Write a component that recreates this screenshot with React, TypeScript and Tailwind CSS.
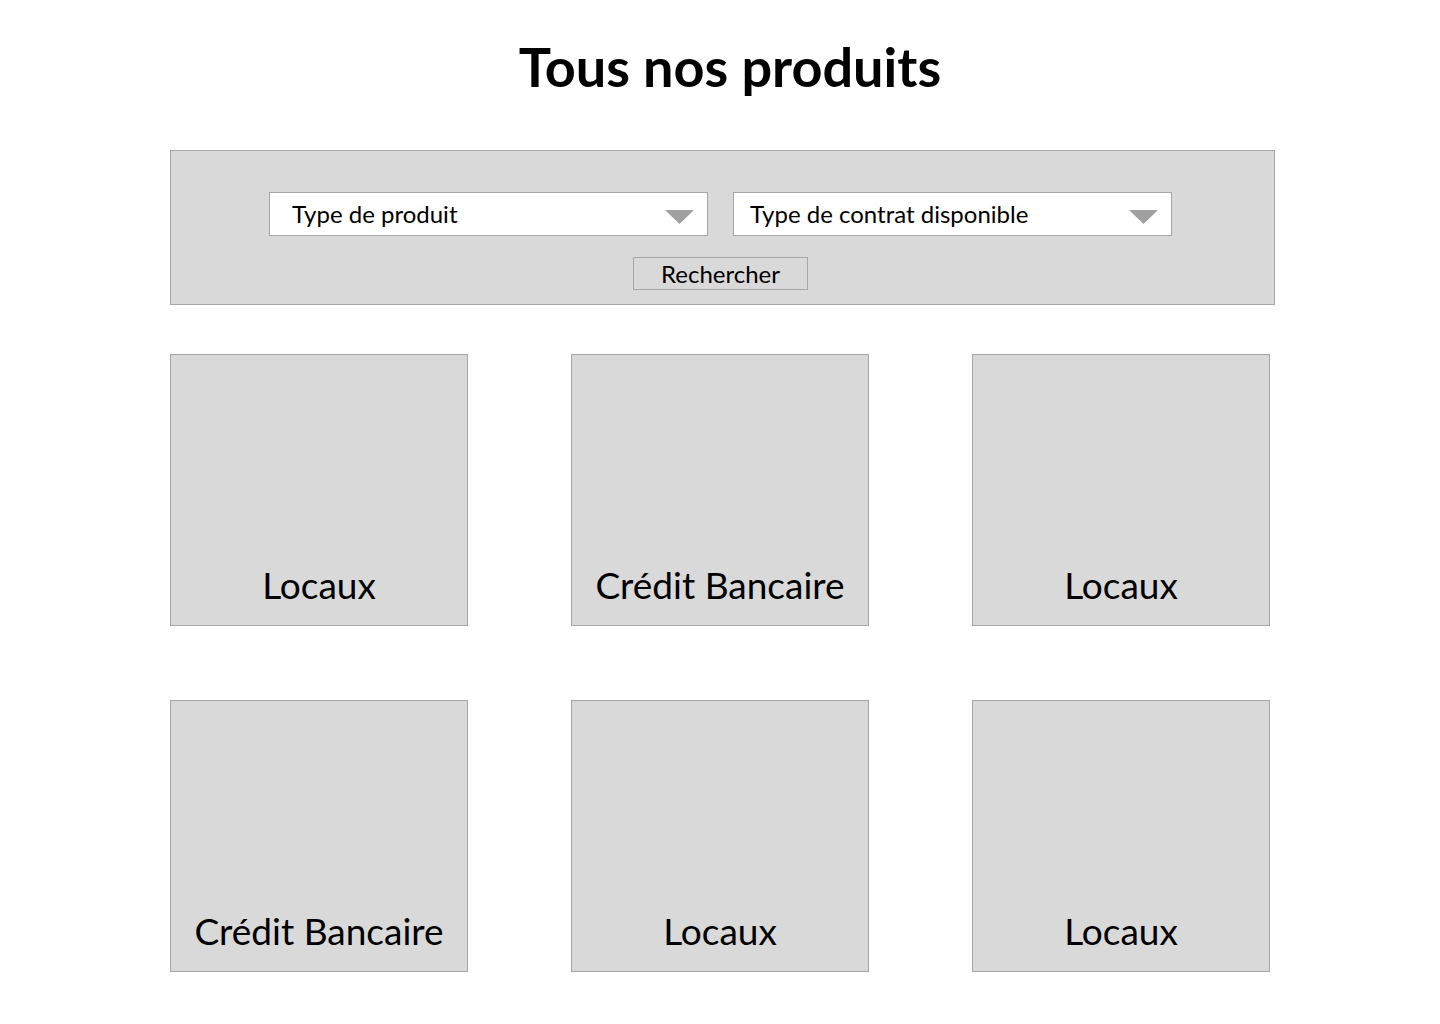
const products = [
  "Locaux",
  "Crédit Bancaire",
  "Locaux",
  "Crédit Bancaire",
  "Locaux",
  "Locaux",
];

function Select({ label, pad }: { label: string; pad: string }) {
  return (
    <div
      className={`flex h-[44px] w-[439px] items-center justify-between border border-[#a6a6a6] bg-white pr-[13px] ${pad}`}
    >
      <span className="text-[24px] leading-none text-black">{label}</span>
      <svg width="29" height="14" viewBox="0 0 29 14" className="mt-[6px]">
        <polygon points="0,0 29,0 14.5,14" fill="#a0a0a0" />
      </svg>
    </div>
  );
}

export default function App() {
  return (
    <main
      className="min-h-[1024px] bg-white text-black"
      style={{ fontFamily: "Lato, 'Noto Sans', sans-serif" }}
    >
      <h1 className="pt-[35px] pl-[20px] text-center text-[54px] font-bold leading-[64px]">
        Tous nos produits
      </h1>

      <section className="ml-[170px] mt-[51px] flex w-[1105px] flex-col items-center border border-[#a6a6a6] bg-[#d9d9d9] pt-[41px] pb-[14px]">
        <div className="-ml-[4px] flex gap-[25px]">
          <Select label="Type de produit" pad="pl-[22px]" />
          <Select label="Type de contrat disponible" pad="pl-[16px]" />
        </div>
        <button className="-ml-[4px] mt-[21px] h-[33px] w-[175px] border border-[#a6a6a6] bg-[#d9d9d9] text-[24px] leading-none text-black">
          Rechercher
        </button>
      </section>

      <section className="ml-[170px] mt-[49px] grid w-[1100px] grid-cols-[298px_298px_298px] justify-between gap-y-[74px]">
        {products.map((p, i) => (
          <article
            key={i}
            className="flex h-[272px] flex-col items-center justify-end border border-[#a6a6a6] bg-[#d9d9d9] pb-[17px]"
          >
            <span className="text-[37px] leading-[46px]">{p}</span>
          </article>
        ))}
      </section>
    </main>
  );
}
